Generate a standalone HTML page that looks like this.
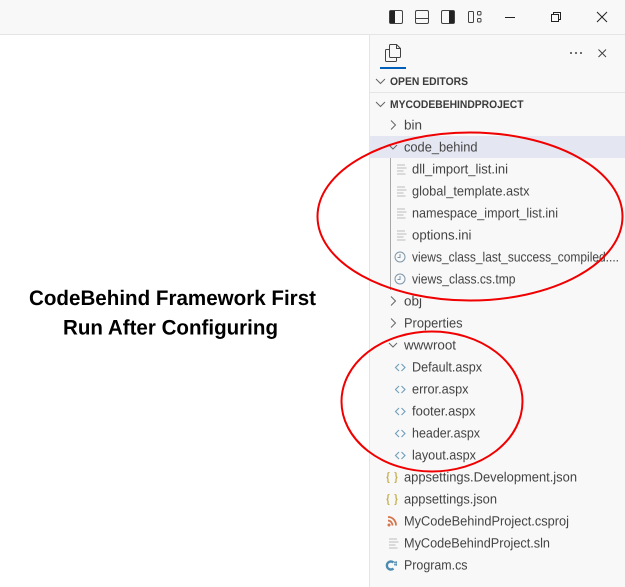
<!DOCTYPE html>
<html><head><meta charset="utf-8"><style>
html,body{margin:0;padding:0;width:625px;height:587px;overflow:hidden;background:#fff}
svg{display:block;position:absolute;left:0;top:0}
text{font-family:"Liberation Sans",sans-serif;font-size:13.5px;fill:#444}
.h{font-size:11px;font-weight:bold;fill:#3b3b3b}
.t{font-size:21px;font-weight:bold;fill:#000}
.i{fill:none;stroke:#424242;stroke-width:1}
.c{fill:none;stroke:#666;stroke-width:1}
.f{stroke:#cfcfcf;stroke-width:1.4}
.x{fill:none;stroke:#6f9dba;stroke-width:1.1}
</style></head><body>
<svg width="625" height="587" viewBox="0 0 625 587" xmlns="http://www.w3.org/2000/svg" text-rendering="geometricPrecision">
<rect width="625" height="587" fill="#fff"/>
<rect width="625" height="34" fill="#f8f8f8"/>
<rect y="34" width="625" height="1" fill="#e5e5e5"/>
<rect x="370" y="35" width="255" height="552" fill="#f8f8f8"/>
<rect x="369" y="35" width="1" height="552" fill="#e5e5e5"/>
<rect x="370" y="92" width="255" height="1" fill="#e5e5e5"/>
<rect x="370" y="136" width="255" height="22" fill="#e4e6f1"/>
<rect x="390" y="158" width="1" height="132" fill="#a8a8a8"/>

<!-- title bar icons -->
<rect class="i" x="389.5" y="10.5" width="13" height="13" rx="1.5"/><rect x="390" y="11" width="5" height="12" fill="#222"/>
<rect class="i" x="415.5" y="10.5" width="13" height="13" rx="1.5"/><path class="i" d="M415.5 18.5h13"/>
<rect class="i" x="441.5" y="10.5" width="13" height="13" rx="1.5"/><rect x="449" y="11" width="5" height="12" fill="#222"/>
<rect class="i" x="468.5" y="11.5" width="5" height="11" rx="1"/><rect class="i" x="477.5" y="11.5" width="3.5" height="3.5" rx="1"/><rect class="i" x="477.5" y="18.5" width="3.5" height="3.5" rx="1"/>
<path d="M505 17.5h10" stroke="#222" fill="none"/>
<rect x="551.5" y="14.5" width="7" height="7" fill="none" stroke="#222"/><path d="M553.5 14.5v-2h7v7h-2" fill="none" stroke="#222"/>
<path d="M597 12l10 10M607 12l-10 10" stroke="#222" fill="none"/>

<!-- explorer icon -->
<path d="M389.5 49.5h-3a1 1 0 0 0-1 1v10a1 1 0 0 0 1 1h9a1 1 0 0 0 1-1v-3" class="i"/>
<path d="M389.5 45.5a1 1 0 0 1 1-1h6l4 4v8a1 1 0 0 1-1 1h-9a1 1 0 0 1-1-1z" class="i"/>
<path d="M396.5 44.5v4h4" class="i"/>
<rect x="380" y="67" width="26" height="2" fill="#005fb8"/>
<circle cx="571" cy="53" r="1" fill="#424242"/><circle cx="576" cy="53" r="1" fill="#424242"/><circle cx="581" cy="53" r="1" fill="#424242"/>
<path d="M598.5 49.5l7.5 7.500M606 49.5l-7.5 7.500" stroke="#424242" fill="none"/>

<!-- headers -->
<path class="c" d="M376 79l4.500 4.500 4.500-4.500"/>
<text class="h" x="390" y="85" textLength="78" lengthAdjust="spacingAndGlyphs">OPEN EDITORS</text>
<path class="c" d="M376 102l4.500 4.500 4.500-4.500"/>
<text class="h" x="390" y="108" textLength="133.500" lengthAdjust="spacingAndGlyphs">MYCODEBEHINDPROJECT</text>

<!-- chevrons -->
<path class="c" d="M391 120.500l4.500 4.500-4.500 4.500M391 296.500l4.500 4.500-4.500 4.500M391 318.500l4.500 4.500-4.500 4.500"/>
<path class="c" d="M389 145l4 4 4-4M389 343l4 4 4-4"/>

<!-- file lines -->
<g class="f">
<path d="M397 165h8M397 168h9.500M397 171h6.500M397 174h8.500"/>
<path d="M397 187h8M397 190h9.500M397 193h6.500M397 196h8.500"/>
<path d="M397 209h8M397 212h9.500M397 215h6.500M397 218h8.500"/>
<path d="M397 231h8M397 234h9.500M397 237h6.500M397 240h8.500"/>
<path d="M389 539h8M389 542h9.500M389 545h6.500M389 548h8.500"/>
</g>
<!-- clocks -->
<g fill="none" stroke="#7d96a8">
<circle cx="400" cy="257" r="5"/><path d="M400 254v3.500h-2.500"/>
<circle cx="400" cy="279" r="5"/><path d="M400 276v3.500h-2.500"/>
</g>
<!-- code icons -->
<g class="x">
<path d="M399 364l-3.500 3.500 3.500 3.500M401.500 364l3.500 3.500-3.500 3.500"/>
<path d="M399 386l-3.500 3.500 3.500 3.500M401.500 386l3.500 3.500-3.500 3.500"/>
<path d="M399 408l-3.500 3.500 3.500 3.500M401.500 408l3.500 3.500-3.500 3.500"/>
<path d="M399 430l-3.500 3.500 3.500 3.500M401.500 430l3.500 3.500-3.500 3.500"/>
<path d="M399 452l-3.500 3.500 3.500 3.500M401.500 452l3.500 3.500-3.500 3.500"/>
</g>
<!-- json -->
<g fill="none" stroke="#c4b04e" stroke-width="1.300">
<path d="M389.500 472.500c-2 0-1.500 1-1.500 2.500s-.500 2.500-1.500 2.500c1 0 1.500 1 1.500 2.500s-.500 2.500 1.500 2.500M394.500 472.500c2 0 1.500 1 1.500 2.500s.500 2.500 1.500 2.500c-1 0-1.500 1-1.500 2.500s.500 2.500-1.500 2.500"/>
<path d="M389.500 494.500c-2 0-1.500 1-1.500 2.500s-.500 2.500-1.500 2.500c1 0 1.500 1 1.500 2.500s-.500 2.500 1.500 2.500M394.500 494.500c2 0 1.500 1 1.500 2.500s.500 2.500 1.500 2.500c-1 0-1.500 1-1.500 2.500s.500 2.500-1.500 2.500"/>
</g>
<!-- rss -->
<g fill="none" stroke="#d4744a" stroke-width="1.800">
<path d="M388 517c4.500 0 8 3.500 8 8.500M388 520.500c2.500 0 4.500 2.500 4.500 5"/>
</g>
<circle cx="389" cy="525" r="1.500" fill="#d4744a"/>
<!-- C# -->
<path d="M393.500 562.500a4 4 0 1 0 0 6" fill="none" stroke="#4d8cb0" stroke-width="2.400"/>
<path d="M394 562.500h3M394 564.500h3M395 561v5M396.300 561v5" stroke="#4d8cb0" stroke-width=".7" fill="none"/>

<!-- tree text -->
<g>
<text x="404" y="129.500" textLength="18" lengthAdjust="spacingAndGlyphs">bin</text>
<text x="404" y="151.500" textLength="73.500" lengthAdjust="spacingAndGlyphs">code_behind</text>
<text x="412" y="173.500" textLength="96" lengthAdjust="spacingAndGlyphs">dll_import_list.ini</text>
<text x="412" y="195.500" textLength="117.500" lengthAdjust="spacingAndGlyphs">global_template.astx</text>
<text x="412" y="217.500" textLength="146" lengthAdjust="spacingAndGlyphs">namespace_import_list.ini</text>
<text x="412" y="239.500" textLength="59.500" lengthAdjust="spacingAndGlyphs">options.ini</text>
<text x="412" y="261.500" textLength="207" lengthAdjust="spacingAndGlyphs">views_class_last_success_compiled....</text>
<text x="412" y="283.500" textLength="103.500" lengthAdjust="spacingAndGlyphs">views_class.cs.tmp</text>
<text x="404" y="305.500" textLength="18" lengthAdjust="spacingAndGlyphs">obj</text>
<text x="404" y="327.500" textLength="58.500" lengthAdjust="spacingAndGlyphs">Properties</text>
<text x="404" y="349.500" textLength="52" lengthAdjust="spacingAndGlyphs">wwwroot</text>
<text x="412" y="371.500" textLength="70" lengthAdjust="spacingAndGlyphs">Default.aspx</text>
<text x="412" y="393.500" textLength="56.500" lengthAdjust="spacingAndGlyphs">error.aspx</text>
<text x="412" y="415.500" textLength="63.500" lengthAdjust="spacingAndGlyphs">footer.aspx</text>
<text x="412" y="437.500" textLength="68" lengthAdjust="spacingAndGlyphs">header.aspx</text>
<text x="412" y="459.500" textLength="64" lengthAdjust="spacingAndGlyphs">layout.aspx</text>
<text x="404" y="481.500" textLength="173" lengthAdjust="spacingAndGlyphs">appsettings.Development.json</text>
<text x="404" y="503.500" textLength="93" lengthAdjust="spacingAndGlyphs">appsettings.json</text>
<text x="404" y="525.500" textLength="165" lengthAdjust="spacingAndGlyphs">MyCodeBehindProject.csproj</text>
<text x="404" y="547.500" textLength="146" lengthAdjust="spacingAndGlyphs">MyCodeBehindProject.sln</text>
<text x="404" y="569.500" textLength="63.500" lengthAdjust="spacingAndGlyphs">Program.cs</text>
</g>

<!-- title -->
<text class="t" x="29" y="305" textLength="287" lengthAdjust="spacingAndGlyphs">CodeBehind Framework First</text>
<text class="t" x="63" y="334.500" textLength="215" lengthAdjust="spacingAndGlyphs">Run After Configuring</text>

<!-- ellipses -->
<ellipse cx="470" cy="216.500" rx="152.500" ry="84" fill="none" stroke="#f00000" stroke-width="2"/>
<ellipse cx="432" cy="401.500" rx="90.500" ry="70" fill="none" stroke="#f00000" stroke-width="2"/>
</svg>
</body></html>
